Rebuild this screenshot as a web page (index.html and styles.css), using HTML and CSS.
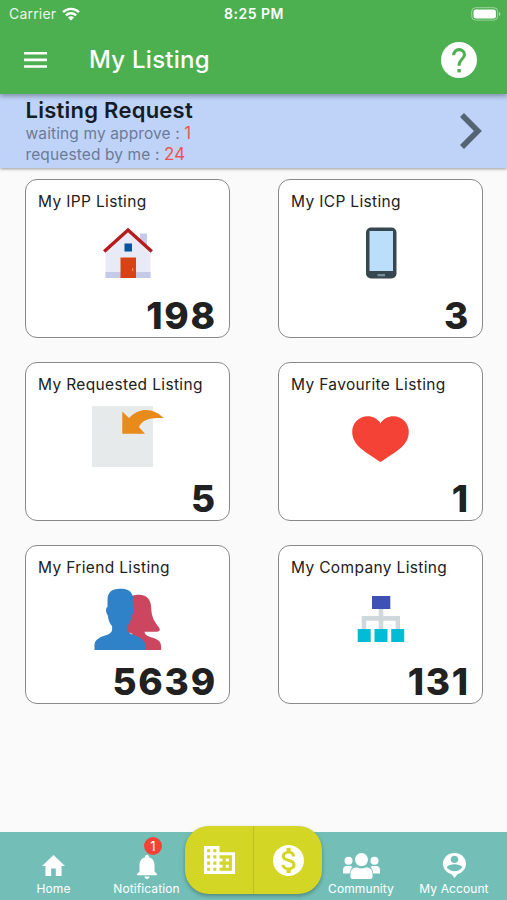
FILE: index.html
```
<!DOCTYPE html>
<html lang="en">
<head>
    <meta charset="UTF-8">
    <meta name="viewport" content="width=device-width, initial-scale=1.0">
    <title>My Listing</title>
    <link rel="stylesheet" href="styles.css">
</head>
<body>
    <div class="app">
        <header class="header">
            <div class="status-bar">
                <div class="carrier">
                    <span>Carrier</span>
                    <svg width="18" height="14" viewBox="0 0 18 14" fill="none" stroke="#fff" stroke-width="2.4">
                        <path d="M1 5.2a11.4 11.4 0 0 1 16 0"/>
                        <path d="M3.9 8.3a7.3 7.3 0 0 1 10.2 0"/>
                        <path d="M9 13.6 5.9 10.5a4.4 4.4 0 0 1 6.2 0z" fill="#fff" stroke="none"/>
                    </svg>
                </div>
                <span class="clock">8:25 PM</span>
                <svg class="battery" width="30" height="14" viewBox="0 0 30 14">
                    <rect x=".7" y=".7" width="26" height="12.4" rx="3.8" fill="none" stroke="#fff" stroke-opacity=".45"/>
                    <rect x="2.5" y="2.4" width="22.4" height="9" rx="2.2" fill="#fff"/>
                    <path d="M28 4.9c1.8.6 1.8 3.4 0 4z" fill="#fff" fill-opacity=".55"/>
                </svg>
            </div>
            <div class="toolbar">
                <svg class="menu-icon" width="23" height="16" viewBox="0 0 23 16" fill="#fff">
                    <path d="M0 0h23v2.5H0zM0 6.6h23v2.6H0zM0 13.3h23v2.5H0z"/>
                </svg>
                <h1>My Listing</h1>
                <svg class="help-icon" width="36" height="36" viewBox="0 0 36 36">
                    <circle cx="18" cy="18" r="18" fill="#fff"/>
                    <path d="M12.700 13.200c0-3.200 2.300-5.600 5.400-5.600s5.400 2.300 5.400 5.200c0 4-5.400 5-5.400 9.500v1.500" fill="none" stroke="#4caf50" stroke-width="3.100"/>
                    <path d="M16.400 27h3.400v3.400h-3.400z" fill="#4caf50"/>
                </svg>
            </div>
        </header>

        <section class="request">
            <div>
                <h2>Listing Request</h2>
                <p>waiting my approve : <b>1</b></p>
                <p>requested by me : <b>24</b></p>
            </div>
            <svg width="22" height="36" viewBox="0 0 22 36" fill="none" stroke="#546473" stroke-width="5.6">
                <path d="M2 2l15.900 16L2 34"/>
            </svg>
        </section>

        <main class="listings">
            <div class="card">
                <h3>My IPP Listing</h3>
                <div class="card-icon">
                    <svg width="52" height="52" viewBox="0 0 52 52">
                        <path d="M38 6.500h7V20h-7z" fill="#c5cae9"/>
                        <path d="M26 4 3.500 24v27h45V24z" fill="#e8eaf6"/>
                        <path d="M3.500 45h45v6h-45z" fill="#c5cae9"/>
                        <path d="M18.500 30.500h15.500V51H18.500z" fill="#d84315"/>
                        <path d="M22.500 16.500h7.500v8h-7.500z" fill="#01579b"/>
                        <path d="M2.200 24.500 26 3l23.800 21.500" fill="none" stroke="#b71c1c" stroke-width="3.400"/>
                        <path d="M30.600 41v3" stroke="#ff8a65" stroke-width="1.200"/>
                    </svg>
                </div>
                <div class="count">198</div>
            </div>

            <div class="card">
                <h3>My ICP Listing</h3>
                <div class="card-icon">
                    <svg width="32" height="52" viewBox="0 0 32 52">
                        <rect x="1" y=".5" width="30.500" height="51" rx="5" fill="#37474f"/>
                        <path d="M4.500 4h23.500v40H4.500z" fill="#bbdefb"/>
                        <path d="M12.500 47h7.500v2.300h-7.500z" fill="#78909c"/>
                    </svg>
                </div>
                <div class="count">3</div>
            </div>

            <div class="card">
                <h3>My Requested Listing</h3>
                <div class="card-icon">
                    <svg width="72" height="61" viewBox="0 0 72 61">
                        <path d="M0 0h61v61H0z" fill="#e6eaea"/>
                        <path d="M30.300 5.500 37 12.100C47 .8 62 1.500 71.800 12.300 60 10.800 49.500 13.500 47 21.200L53 27.700H30.300z" fill="#e98b1b"/>
                    </svg>
                </div>
                <div class="count">5</div>
            </div>

            <div class="card">
                <h3>My Favourite Listing</h3>
                <div class="card-icon heart">
                    <svg width="57" height="46" viewBox="0 0 57 46">
                        <path d="M28.500 7.200C25.500 2.800 20.900.3 15.600.3 7 .3.200 7.200.200 15.700.200 29.500 13 35.500 28.500 46 44 35.500 56.800 29.500 56.800 15.700 56.800 7.200 50 .3 41.400.3c-5.300 0-9.900 2.500-12.900 6.900z" fill="#f44336"/>
                    </svg>
                </div>
                <div class="count">1</div>
            </div>

            <div class="card">
                <h3>My Friend Listing</h3>
                <div class="card-icon">
                    <svg width="68" height="62" viewBox="0 0 68 62">
                        <path d="M33 12C35 8.500 40 6.800 45 6.800 53 6.800 57 12 57.200 20 57.500 30 61 34 65 39.500 67 42.500 65 43.800 62 43.800H50.500C51 49 58 48.800 63 51.500 67 54 67.200 56 67.200 62H33z" fill="#cc4660"/>
                        <path d="M35 44.500c1 .8 2.200 1.200 3.200 1v2.200L34.500 46z" fill="#fff"/>
                        <path d="M13.500 19V12C13.500 4.500 17.500.7 26 .7 33 .7 36 2.500 37.500 5.500 40 8.500 39.500 14 39.200 18c2 1.500.8 7.500-.9 9C37.500 32 35 36 33.500 38c-.3 5 .5 6.500 4.500 8.500C46 49 51.500 52 51.500 58v4H.5V56c1-6 9-8 14-9.800 3.500-1.700 4-3.700 3.500-8.200-2-2-3.800-6-4.300-11-1.800-1.500-2.500-7-.2-8z" fill="#3082c8"/>
                    </svg>
                </div>
                <div class="count">5639</div>
            </div>

            <div class="card">
                <h3>My Company Listing</h3>
                <div class="card-icon">
                    <svg width="48" height="48" viewBox="0 0 48 48">
                        <path d="M21.700 13h4.600v8H43v13h-4.300v-8.300H26.300V34h-4.600v-8.300H9.200V34H4.700V21h17z" fill="#cfd8dc"/>
                        <path d="M15 1h18.300v13H15z" fill="#3f51b5"/>
                        <path d="M.7 34h13v13H.7zM17.500 34h13v13h-13zM34.200 34h13v13h-13z" fill="#00bcd4"/>
                    </svg>
                </div>
                <div class="count">131</div>
            </div>
        </main>

        <nav class="bottom-nav">
            <a class="nav-item">
                <svg width="23" height="21" viewBox="2 3 20 17" preserveAspectRatio="none" fill="#fff">
                    <path d="M10 20v-6h4v6h5v-8h3L12 3 2 12h3v8z"/>
                </svg>
                <span>Home</span>
            </a>
            <a class="nav-item notification">
                <svg width="20" height="25" viewBox="4 2 16 20" fill="#fff">
                    <path d="M12 22c1.100 0 2-.9 2-2h-4c0 1.100.890 2 2 2zm6-6v-5c0-3.070-1.640-5.640-4.500-6.320V4c0-.830-.670-1.500-1.500-1.500s-1.500.670-1.500 1.500v.680C7.630 5.360 6 7.920 6 11v5l-2 2v1h16v-1l-2-2z"/>
                </svg>
                <span>Notification</span>
                <i class="badge">1</i>
            </a>
            <div class="nav-center">
                <a>
                    <svg width="31" height="28" viewBox="2 3 20 18" fill="#fff">
                        <path d="M12 7V3H2v18h20V7H12zM6 19H4v-2h2v2zm0-4H4v-2h2v2zm0-4H4V9h2v2zm0-4H4V5h2v2zm4 12H8v-2h2v2zm0-4H8v-2h2v2zm0-4H8V9h2v2zm0-4H8V5h2v2zm10 12h-8v-2h2v-2h-2v-2h2v-2h-2V9h8v10zm-2-8h-2v2h2v-2zm0 4h-2v2h2v-2z"/>
                    </svg>
                </a>
                <a>
                    <svg width="31" height="31" viewBox="2 2 20 20" fill="#fff">
                        <path d="M12 2C6.480 2 2 6.480 2 12s4.480 10 10 10 10-4.480 10-10S17.520 2 12 2zm1.410 16.090V20h-2.670v-1.930c-1.710-.360-3.160-1.460-3.270-3.400h1.960c.1 1.050.820 1.870 2.650 1.870 1.960 0 2.400-.980 2.400-1.590 0-.830-.440-1.610-2.670-2.140-2.480-.6-4.180-1.620-4.180-3.670 0-1.720 1.390-2.840 3.110-3.210V4h2.670v1.950c1.860.450 2.790 1.860 2.850 3.390H14.300c-.050-1.110-.640-1.870-2.220-1.870-1.500 0-2.400.680-2.400 1.640 0 .840.650 1.390 2.670 1.910s4.180 1.390 4.180 3.910c-.010 1.830-1.380 2.830-3.120 3.160z"/>
                    </svg>
                </a>
            </div>
            <a class="nav-item community">
                <svg width="37" height="26" viewBox="0 0 37 26" fill="#fff">
                    <circle cx="5.500" cy="7.700" r="4"/>
                    <circle cx="31.500" cy="7.700" r="4"/>
                    <circle cx="18.500" cy="6.600" r="6.500"/>
                    <path d="M0 20.500V17c0-2.500 1.500-4 4-4h3.500l2 1C8 15.500 7 17.500 6.700 20.500zM37 20.500V17c0-2.500-1.500-4-4-4h-3.500l-2 1c1.500 1.500 2.500 3.500 2.800 6.500z"/>
                    <path d="M7.500 24v-3.500c0-3.500 2.500-6 6-6h.7c3 1.300 5.600 1.300 8.600 0h.7c3.500 0 6 2.500 6 6V24c0 1-.8 2-2 2h-18c-1.200 0-2-1-2-2z"/>
                </svg>
                <span>Community</span>
            </a>
            <a class="nav-item">
                <svg width="23" height="25" viewBox="3 2 18 21" preserveAspectRatio="none" fill="#fff">
                    <path fill-rule="evenodd" d="M12 2C7 2 3 6 3 11c0 4.200 2.800 7.600 6.600 8.700L12 23l2.400-3.300C18.200 18.600 21 15.200 21 11c0-5-4-9-9-9zm0 2.400c1.700 0 3 1.300 3 3s-1.300 3-3 3-3-1.300-3-3 1.300-3 3-3zm0 13c-2.500 0-4.700-1.300-6-3.200 0-2 4-2.700 6-2.700s6 .7 6 2.700c-1.300 1.900-3.500 3.200-6 3.200z"/>
                </svg>
                <span>My Account</span>
            </a>
        </nav>
    </div>
</body>
</html>
```
FILE: styles.css
```
* {
    margin: 0;
    padding: 0;
    box-sizing: border-box;
}

body {
    font-family: Inter, Roboto, sans-serif;
    background: #fafafa;
    color: #212121;
}

svg {
    display: block;
    flex: none;
}

.app {
    height: 900px;
    display: flex;
    flex-direction: column;
    overflow: hidden;
}

/* Header */
.header {
    position: relative;
    z-index: 2;
    height: 94px;
    background: #4caf50;
    color: white;
    box-shadow: 0 2px 5px rgba(0, 0, 0, 0.35);
}

.status-bar {
    display: grid;
    grid-template-columns: 1fr auto 1fr;
    align-items: center;
    height: 27px;
    padding: 0 6px 0 9px;
    font-size: 14px;
}

.carrier {
    display: flex;
    align-items: center;
    gap: 6px;
    letter-spacing: 0.2px;
    color: #e9f6e9;
}

.clock {
    margin-right: 2px;
    font-size: 14px;
    font-weight: 600;
    letter-spacing: 0.5px;
}

.battery {
    justify-self: end;
}

.toolbar {
    display: flex;
    align-items: center;
    height: 66px;
    padding: 0 30px 0 24px;
}

.toolbar h1 {
    flex: 1;
    margin: -1px 0 0 42px;
    font-size: 24px;
    font-weight: 500;
    letter-spacing: 0.25px;
}

/* Listing request banner */
.request {
    position: relative;
    z-index: 1;
    display: flex;
    justify-content: space-between;
    height: 74px;
    padding: 4px 25px 0 25.5px;
    background: #bfd3f9;
    box-shadow: 0 1px 3px rgba(0, 0, 0, 0.4);
}

.request h2 {
    font-size: 22px;
    font-weight: 600;
    line-height: 25px;
    letter-spacing: 0.25px;
    color: #141c28;
}

.request p {
    font-size: 15.5px;
    line-height: 21px;
    letter-spacing: 0.12px;
    color: #6b7b96;
}

.request b {
    font-size: 17px;
    font-weight: 400;
    color: #ef5350;
}

.request svg {
    margin-top: 15px;
}

/* Cards */
.listings {
    flex: 1;
    display: grid;
    grid-template-columns: 205px 205px;
    grid-auto-rows: 159px;
    gap: 24px 48px;
    padding: 11px 25px;
}

.card {
    padding: 11px 12px 0;
    background: white;
    border: 1px solid #888;
    border-radius: 12px;
}

.card h3 {
    height: 24px;
    font-size: 15.5px;
    font-weight: 400;
    line-height: 21px;
    letter-spacing: 0.35px;
    white-space: nowrap;
}

.card-icon {
    display: flex;
    align-items: center;
    justify-content: center;
    height: 76px;
}

.heart {
    padding-top: 6px;
}

.count {
    font-size: 37px;
    font-weight: 800;
    line-height: 50px;
    letter-spacing: 1.8px;
    text-align: right;
}

/* Bottom navigation */
.bottom-nav {
    display: grid;
    grid-template-columns: 93px 92px 137px 92px 93px;
    height: 68px;
    background: #73bfb8;
    color: white;
}

.nav-item {
    position: relative;
    display: flex;
    flex-direction: column;
    align-items: center;
    justify-content: flex-end;
    gap: 2px;
    padding-bottom: 4px;
    font-size: 12px;
    line-height: 15px;
    letter-spacing: 0.1px;
    white-space: nowrap;
}

.nav-item:first-child {
    gap: 5px;
    padding-left: 14px;
}

.nav-item:last-child {
    gap: 3px;
    padding-right: 13px;
}

.notification {
    padding-left: 15px;
}

.community {
    padding-right: 14px;
}

.badge {
    position: absolute;
    top: 5px;
    left: 51px;
    width: 18px;
    height: 18px;
    border-radius: 50%;
    background: #f44336;
    font-size: 13px;
    font-style: normal;
    line-height: 18px;
    text-align: center;
}

.nav-center {
    display: flex;
    height: 68px;
    margin-top: -6px;
    border-radius: 24px;
    background: #d3d624;
    box-shadow: 0 2px 4px rgba(0, 0, 0, 0.3);
}

.nav-center a {
    flex: 1;
    display: flex;
    align-items: center;
    justify-content: center;
}

.nav-center a:first-child {
    border-right: 1px solid #bcc022;
}
```
